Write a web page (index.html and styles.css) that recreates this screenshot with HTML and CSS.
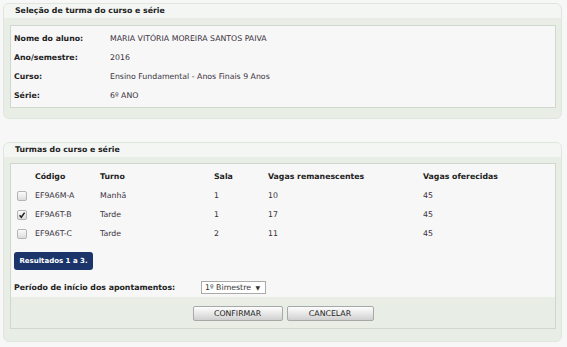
FILE: index.html
```html
<!DOCTYPE html>
<html lang="pt-BR">
<head>
  <meta charset="UTF-8">
  <title>Seleção de turma</title>
  <link rel="stylesheet" href="styles.css">
</head>
<body>
  <div class="page">
    <div class="panel">
      <div class="panel-title">Seleção de turma do curso e série</div>
      <div class="panel-body">
        <div class="box info">
          <div class="info-row"><span class="label">Nome do aluno:</span><span class="value">MARIA VITÓRIA MOREIRA SANTOS PAIVA</span></div>
          <div class="info-row"><span class="label">Ano/semestre:</span><span class="value">2016</span></div>
          <div class="info-row"><span class="label">Curso:</span><span class="value">Ensino Fundamental - Anos Finais 9 Anos</span></div>
          <div class="info-row"><span class="label">Série:</span><span class="value">6º ANO</span></div>
        </div>
      </div>
    </div>

    <div class="panel second">
      <div class="panel-title">Turmas do curso e série</div>
      <div class="panel-body">
        <div class="box">
          <div class="grid head">
            <span></span><span>Código</span><span>Turno</span><span>Sala</span><span>Vagas remanescentes</span><span>Vagas oferecidas</span>
          </div>
          <div class="grid">
            <span><i class="check"></i></span><span>EF9A6M-A</span><span>Manhã</span><span>1</span><span>10</span><span>45</span>
          </div>
          <div class="grid">
            <span><i class="check on"><svg viewBox="0 0 10 10" width="10" height="10"><path d="M2.6 5.2 L4.3 7.2 L7.6 2.6" fill="none" stroke="#222" stroke-width="1.5"/></svg></i></span><span>EF9A6T-B</span><span>Tarde</span><span>1</span><span>17</span><span>45</span>
          </div>
          <div class="grid">
            <span><i class="check"></i></span><span>EF9A6T-C</span><span>Tarde</span><span>2</span><span>11</span><span>45</span>
          </div>
          <div class="badge">Resultados 1 a 3.</div>
          <div class="period">
            <span class="period-label">Período de início dos apontamentos:</span>
            <span class="select">1º Bimestre <b>▼</b></span>
          </div>
          <div class="actions">
            <button class="btn">CONFIRMAR</button>
            <button class="btn">CANCELAR</button>
          </div>
        </div>
      </div>
    </div>
  </div>
</body>
</html>
```

FILE: styles.css
```css
html,body{
  margin: 0;
  padding: 0;
}
body{
  background: #f7f7f7;
  font-family: "DejaVu Sans", Verdana, sans-serif;
  font-size: 7.8px;
  color: #333;
}
.page{
  padding: 3px 5px 0 3px;
}
.panel{
  border: 1px solid #dfe6dd;
  border-radius: 6px;
  background: #e8eee6;
  overflow: hidden;
}
.panel.second{
  margin-top: 23px;
}
.panel-title{
  height: 14px;
  line-height: 14px;
  padding-left: 11px;
  background: #f4f6f3;
  font-weight: bold;
  color: #222;
}
.panel-body{
  padding: 7px 5px 10px 6px;
}
.second .panel-body{
  padding: 6px 5px 12px 6px;
}
.box{
  border: 1px solid #cfd8cd;
  background: #f7f7f7;
}
.info{
  padding: 3px 3px 2px;
}
.info-row{
  display: flex;
  line-height: 19px;
}
.label{
  width: 96px;
  flex: none;
  font-weight: bold;
  color: #222;
}
.value{
  color: #3a3140;
}
.grid{
  display: grid;
  grid-template-columns: 24px 65px 114px 54px 155px 1fr;
  line-height: 19px;
  color: #3a3140;
}
.grid.head{
  margin-top: 3px;
  font-weight: bold;
  color: #222;
}
.grid > span:first-child{
  display: flex;
  align-items: center;
  padding-left: 6px;
}
.check{
  display: block;
  width: 8px;
  height: 8px;
  border: 1px solid #b4b4b4;
  border-radius: 2px;
  background: linear-gradient(#fbfbfb, #dcdcdc);
  position: relative;
}
.check svg{
  position: absolute;
  left: -1px;
  top: -1px;
}
.badge{
  display: inline-block;
  margin: 9px 0 0 3px;
  height: 18px;
  line-height: 18px;
  width: 79px;
  text-align: center;
  border-radius: 3px;
  background: #1b356a;
  color: #fff;
  font-size: 7px;
  font-weight: bold;
  white-space: nowrap;
}
.period{
  display: flex;
  align-items: center;
  height: 13px;
  margin: 11px 0 3px 3px;
}
.period-label{
  width: 187px;
  font-weight: bold;
  color: #222;
}
.select{
  display: inline-block;
  width: 60px;
  height: 11px;
  line-height: 11px;
  padding-left: 3px;
  border: 1px solid #aaa;
  background: #fff;
  color: #333;
  white-space: nowrap;
}
.select b{
  font-size: 6px;
  margin-left: 2px;
}
.actions{
  display: flex;
  justify-content: center;
  gap: 4px;
  padding: 9px 0 7px;
  background: #e8eee6;
}
.btn{
  width: 90px;
  height: 15px;
  padding: 0;
  border: 1px solid #a8a8a8;
  border-radius: 2px;
  background: linear-gradient(#fdfdfd, #e3e3e3 60%, #cfcfcf);
  font-family: "DejaVu Sans", Verdana, sans-serif;
  font-size: 7.8px;
  color: #222;
}
.btn + .btn{
  width: 87px;
}
```
